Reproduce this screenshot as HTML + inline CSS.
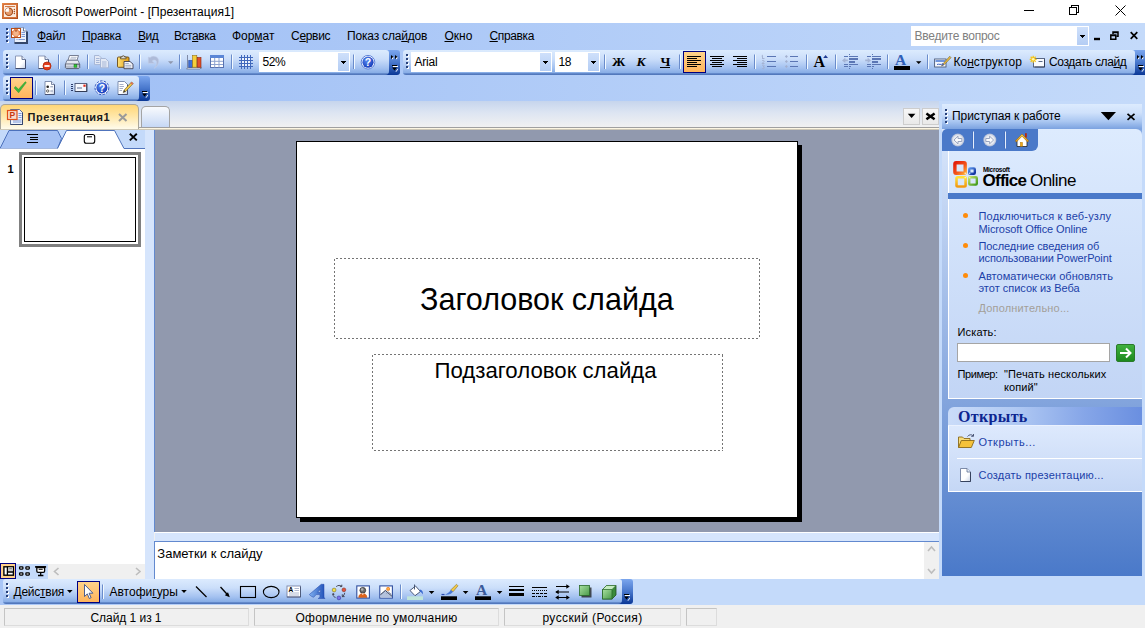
<!DOCTYPE html>
<html lang="ru"><head><meta charset="utf-8"><title>Microsoft PowerPoint - [Презентация1]</title>
<style>
*{box-sizing:border-box;margin:0;padding:0}
html,body{width:1145px;height:628px;overflow:hidden;background:#fff}
body{position:relative;font-family:"Liberation Sans",sans-serif;font-size:12px;color:#000}
.a{position:absolute}
.t{position:absolute;white-space:nowrap;line-height:1}
u{text-decoration:underline;text-underline-offset:1px;text-decoration-thickness:1px}
.tb{position:absolute;height:25px;border-radius:3px 3px 4px 3px;background:linear-gradient(#dcebfe 0,#cbdefa 9px,#a3c1f0 18px,#86ace5 23px,#6389cb 23.500px,#4a70b4 25px)}
.cap{position:absolute;width:12px;height:25px;border-radius:0 3px 3px 0;background:linear-gradient(#7ba6ee 0%,#4877cc 50%,#0a3796 100%)}
.grip{position:absolute;width:3px;height:15px;background:
 linear-gradient(#27417a,#27417a) 0 0/2px 2px no-repeat,linear-gradient(#27417a,#27417a) 0 4px/2px 2px no-repeat,linear-gradient(#27417a,#27417a) 0 8px/2px 2px no-repeat,linear-gradient(#27417a,#27417a) 0 12px/2px 2px no-repeat,
 linear-gradient(#fff,#fff) 1px 1px/2px 2px no-repeat,linear-gradient(#fff,#fff) 1px 5px/2px 2px no-repeat,linear-gradient(#fff,#fff) 1px 9px/2px 2px no-repeat,linear-gradient(#fff,#fff) 1px 13px/2px 2px no-repeat}
.sep{position:absolute;width:2px;height:15px;border-left:1px solid #6a8ccb;border-right:1px solid #f1f9ff;border-top:1px solid transparent}
.on{position:absolute;border:1px solid #000080;background:linear-gradient(#ffd28a,#ffb45c)}
.combo{position:absolute;background:#fff;height:20px}
.dd{position:absolute;right:1px;top:1px;bottom:1px;width:11px;background:linear-gradient(#000,#000) 3px 8px/5px 1px no-repeat,linear-gradient(#000,#000) 4px 9px/3px 1px no-repeat,linear-gradient(#000,#000) 5px 10px/1px 1px no-repeat,linear-gradient(#cfe0fb,#b4cdf4)}
svg{position:absolute;overflow:visible}
.ph{position:absolute;background:repeating-linear-gradient(90deg,#747474 0 2px,transparent 2px 4px) 2px 0/calc(100% - 2px) 1px no-repeat,repeating-linear-gradient(90deg,#747474 0 2px,transparent 2px 4px) 2px 100%/calc(100% - 2px) 1px no-repeat,repeating-linear-gradient(180deg,#747474 0 2px,transparent 2px 4px) 0 1px/1px calc(100% - 1px) no-repeat,repeating-linear-gradient(180deg,#747474 0 2px,transparent 2px 4px) 100% 1px/1px calc(100% - 1px) no-repeat}
.lnk{color:#1c3fa8}
.p{font-size:11px}
.sp{position:absolute;height:18px;top:608px;border:1px solid #dcdcdc;border-top-color:#c4c4c4;border-left-color:#c4c4c4;font-size:12px;text-align:center;line-height:16px;padding-top:1px;white-space:nowrap}
</style></head><body>
<!-- TITLE BAR -->
<div class="a" style="left:0;top:0;width:1145px;height:23px;background:#fff"></div>
<svg style="left:2px;top:3px" width="16" height="16" viewBox="0 0 16 16">
<defs><linearGradient id="gi" x1="0" y1="0" x2="1" y2="1"><stop offset="0" stop-color="#e8894a"/><stop offset="1" stop-color="#a8481a"/></linearGradient></defs>
<rect x="0" y="0" width="16" height="16" fill="url(#gi)"/><rect x="1" y="1" width="14" height="14" fill="#d8743c"/><rect x="2" y="2" width="12" height="12" fill="#fcece0"/>
<rect x="3" y="3" width="10" height="1" fill="#d07a48"/><circle cx="6.900" cy="8.800" r="3.700" fill="#e39a6c" stroke="#a8501f" stroke-width="1.100"/><path d="M6.900 8.800V5.100A3.700 3.700 0 0 0 3.200 8.800z" fill="#fff"/>
<circle cx="12.400" cy="6.600" r=".750" fill="#a8501f"/><circle cx="12.400" cy="8.600" r=".750" fill="#a8501f"/><circle cx="12.400" cy="10.600" r=".750" fill="#a8501f"/></svg>
<div class="t" style="left:22.700px;top:6px;font-size:12px;letter-spacing:.04px">Microsoft PowerPoint - [Презентация1]</div>
<svg style="left:0;top:0" width="1145" height="23" viewBox="0 0 1145 23" fill="none" stroke="#000" stroke-width="1" shape-rendering="crispEdges"><path d="M1024 10.5h10"/><path d="M1069.500 7.500h7v7h-7z"/><path d="M1071.500 7.500v-2h7v7h-2"/><path d="M1115.5 5.5l10 10M1125.5 5.5l-10 10" shape-rendering="auto"/></svg>

<!-- MENU BAR + dock background -->
<div class="a" style="left:0;top:23px;width:1145px;height:81px;background:linear-gradient(90deg,#9ebef5,#c4dafa)"></div>
<div class="grip" style="left:6px;top:28px"></div>
<svg style="left:10px;top:26px" width="20" height="19" viewBox="10 26 20 19">
<path d="M14.500 27.500h9l3.500 3.500v12h-12.500z" fill="#e9f0fc" stroke="#93a5c8" stroke-width="1"/><path d="M23.500 27.500v3.500h3.500" fill="#fff" stroke="#5a6c92" stroke-width=".9"/><path d="M27 31.500v11.500h-12.500" fill="none" stroke="#34466a" stroke-width="2"/>
<path d="M21.500 32.500h3.500M21.500 34.500h3.500M21.500 36.500h3.500M16.500 39.500h1M18.500 39.500h6.500" stroke="#7f9bd8" stroke-width="1"/>
<rect x="11.500" y="28.500" width="9" height="9" fill="#e8824a" stroke="#b24c1a" stroke-width="1"/><circle cx="16" cy="33.200" r="2.800" fill="#f4b48a"/>
<path d="M12.600 31v-1.400h1.400M18 29.600h1.400v1.400M19.400 35v1.400h-1.400M14 36.400h-1.400v-1.400" fill="none" stroke="#fff" stroke-width="1.100"/><path d="M15 30.500l1 1.500 1-1.500z" fill="#7a2a0a"/></svg>
<div class="t m" style="top:30.300px;left:37px;letter-spacing:-.3px"><u>Ф</u>айл</div>
<div class="t m" style="top:30.300px;left:82px;letter-spacing:-.2px"><u>П</u>равка</div>
<div class="t m" style="top:30.300px;left:138px;letter-spacing:-.45px"><u>В</u>ид</div>
<div class="t m" style="top:30.300px;left:174px;letter-spacing:-.44px">Вст<u>а</u>вка</div>
<div class="t m" style="top:30.300px;left:232px;letter-spacing:-.05px">Фор<u>м</u>ат</div>
<div class="t m" style="top:30.300px;left:291px;letter-spacing:-.3px">С<u>е</u>рвис</div>
<div class="t m" style="top:30.300px;left:347px;letter-spacing:-.18px">Показ сла<u>й</u>дов</div>
<div class="t m" style="top:30.300px;left:444.5px"><u>О</u>кно</div>
<div class="t m" style="top:30.300px;left:489.5px;letter-spacing:-.37px"><u>С</u>правка</div>
<div class="combo" style="left:911px;top:26px;width:178px;height:20px"><div class="dd"></div></div>
<div class="t" style="left:914.5px;top:30px;font-size:12px;color:#808080;letter-spacing:-.25px">Введите вопрос</div>
<svg style="left:0;top:23px" width="1145" height="27" viewBox="0 23 1145 27" fill="none" stroke="#000"><path d="M1094 39h6" stroke-width="2.4"/><path d="M1110.8 35h5v4.2h-5zM1110.8 35.6h5" stroke-width="1.5"/><path d="M1113 34v-2h5v4.2h-1.6M1113 32.6h5" stroke-width="1.5"/><path d="M1130.7 32.2l6.6 6.6M1137.3 32.2l-6.6 6.6" stroke-width="1.700"/></svg>
<!-- TOOLBAR 1 (Standard) -->
<div class="cap" style="left:384px;top:50px;width:16px"></div><div class="tb" style="left:3px;top:50px;width:386px"></div>
<div class="grip" style="left:6px;top:54px"></div>
<div class="sep" style="left:58px;top:54px"></div><div class="sep" style="left:87px;top:54px"></div><div class="sep" style="left:139px;top:54px"></div><div class="sep" style="left:179px;top:54px"></div><div class="sep" style="left:231px;top:54px"></div><div class="sep" style="left:353px;top:54px"></div>
<div class="combo" style="left:259px;top:52px;width:91px"><div class="dd"></div></div>
<div class="t" style="left:262.5px;top:56px;font-size:12px;letter-spacing:-.4px">52%</div>
<svg style="left:0;top:48px" width="420" height="30" viewBox="0 48 420 30">
<defs>
<linearGradient id="gpap" x1="0" y1="0" x2="1" y2="1"><stop offset="0" stop-color="#fff"/><stop offset=".6" stop-color="#fff"/><stop offset="1" stop-color="#c9d3e6"/></linearGradient>
<linearGradient id="ggold" x1="0" y1="0" x2="1" y2="0"><stop offset="0" stop-color="#ffe27a"/><stop offset="1" stop-color="#e29a10"/></linearGradient>
<radialGradient id="ghelp" cx=".4" cy=".35" r=".7"><stop offset="0" stop-color="#5a8af0"/><stop offset="1" stop-color="#1238b8"/></radialGradient>
</defs>
<!-- new -->
<path d="M15.500 56h6.500l3.500 3.500v9h-10z" fill="url(#gpap)" stroke="#8592b2" stroke-width=".9"/><path d="M25.500 59.500v9h-10" fill="none" stroke="#3f4c6e"/><path d="M22 56v3.500h3.500" fill="#e8eef9" stroke="#5e6e92" stroke-width=".9"/>
<!-- new + stop -->
<path d="M38.500 56h6.500l3.500 3.500v9h-10z" fill="url(#gpap)" stroke="#8592b2" stroke-width=".9"/><path d="M48.500 59.500v9h-10" fill="none" stroke="#3f4c6e"/><path d="M45 56v3.500h3.500" fill="#e8eef9" stroke="#5e6e92" stroke-width=".9"/>
<circle cx="47" cy="66" r="4" fill="#e23c1c" stroke="#b02808" stroke-width=".8"/><rect x="44.400" y="65.100" width="5.200" height="1.800" fill="#fff"/>
<!-- print -->
<path d="M68 60.300l1.500-4.800h9l-1.500 4.800z" fill="#fff" stroke="#6a7288" stroke-width=".9"/><path d="M70.800 57.300h5.800M70.200 58.900h5.800" stroke="#a4aec4" stroke-width=".8"/>
<path d="M67 60.300h11l1.700 3.900h-14.300z" fill="#e6e9f0" stroke="#666e84" stroke-width=".8"/>
<path d="M65.400 64.200h14.300v3.400l-1 1h-12.300l-1-1z" fill="#b9bfcc" stroke="#4f566a" stroke-width=".9"/><path d="M66 65h8" stroke="#eef0f5" stroke-width="1"/>
<rect x="74" y="64.700" width="2.800" height="2.500" fill="#2ccc2c" stroke="#167816" stroke-width=".5"/>
<!-- copy (disabled) -->
<g fill="#e3e9f5" stroke="#a3b2d2" stroke-width=".9"><path d="M94.5 55.5h4.5l2.8 2.8v6.3h-7.3z"/><path d="M100.5 58.5h5l3 3v6.3h-8z"/></g><path d="M96 58.5h3.5M96 60.5h3.5M96 62.5h3.5M102 62h4.5M102 64h4.5M102 66h4.5" stroke="#9fb0d4" stroke-width=".9"/>
<!-- paste -->
<rect x="117.5" y="57" width="11.5" height="10.3" rx="1" fill="url(#ggold)" stroke="#6a4a14" stroke-width=".9"/><path d="M120.5 58.8v-1.8h1.5a1.3 1.3 0 0 1 2.6 0h1.5v1.8z" fill="#d9d9d9" stroke="#5a4a2a" stroke-width=".8"/>
<path d="M124 61.5h6l3 2.6v4.6h-9z" fill="#f4f6fb" stroke="#3f3f55" stroke-width=".9"/><path d="M125.3 63.5h3.5M125.3 65.3h6M125.3 67h6" stroke="#8f9bb8" stroke-width=".8"/>
<!-- undo (disabled) -->
<path d="M148.3 57v6.3h6.2l-2.3-2.3c1.6-1.6 4-1.2 4.4 1 .4 2.2-.8 4.400-2.300 6.300 3.600-2.300 5.200-6.600 3.900-9.400-1.400-2.900-5.700-3.500-8-1.300z" fill="#aebbd9" stroke="#c4cfe6" stroke-width=".5"/>
<path d="M168 61.200h5.400l-2.700 2.800z" fill="#8e97ae"/>
<!-- chart -->
<path d="M187.500 55v13.500h14" fill="none" stroke="#7f8aa6" stroke-width="1"/><path d="M186.500 69l1.500-1.500h13.500l-1.500 1.500z" fill="#dfe5f0" stroke="#5a6480" stroke-width=".6"/>
<rect x="188.800" y="60.600" width="3.600" height="6.600" fill="#3f6fd8" stroke="#1f3f98" stroke-width=".6"/><rect x="192.600" y="55.600" width="4.200" height="11.600" fill="#f5cf3a" stroke="#9a7410" stroke-width=".6"/><rect x="197.200" y="57.600" width="3.800" height="9.600" fill="#e2502a" stroke="#8a2208" stroke-width=".6"/>
<!-- table -->
<rect x="210.500" y="55.500" width="13" height="12" fill="#fff" stroke="#5872b0" stroke-width="1"/><rect x="210" y="55" width="14" height="3" fill="#5b86d6"/><path d="M214.700 58v9.500M219 58v9.500M211 61.300h12M211 64.500h12" stroke="#8ea3d0" stroke-width="1"/>
<!-- grid -->
<rect x="242" y="58" width="8" height="8" fill="#fff" opacity=".7"/><path d="M241.500 55v14M244.500 55v14M247.500 55v14M250.500 55v14M239 57.500h14M239 60.500h14M239 63.500h14M239 66.500h14" stroke="#4068bc" stroke-width="1" shape-rendering="crispEdges"/>
<!-- help -->
<circle cx="368" cy="62.200" r="6.800" fill="#fff" stroke="#3f6ad0" stroke-width=".8"/><circle cx="368" cy="62.200" r="5.600" fill="url(#ghelp)"/>
<text x="368" y="66" font-family="Liberation Sans,sans-serif" font-weight="bold" font-size="10.500" fill="#fff" text-anchor="middle">?</text>
<!-- cap glyphs -->
<g fill="#000"><path d="M391 55l2.500 2-2.500 2zM395 55l2.500 2-2.500 2z"/><rect x="392" y="65" width="5" height="1"/><path d="M392 67.500h5l-2.500 3z"/></g>
<g fill="#fff"><path d="M392 58l1.500-1v1.200l-1.500 1.200zM396 58l1.500-1v1.200l-1.500 1.200z"/><rect x="393" y="66" width="5" height="1"/><path d="M395.500 71.500l2.500-3v1.200l-2 2.300z"/></g>
</svg>
<!-- TOOLBAR 2 (Formatting) -->
<div class="cap" style="left:1130px;top:50px;width:15px;border-radius:0"></div><div class="tb" style="left:403px;top:50px;width:732px"></div>
<div class="grip" style="left:406px;top:54px"></div>
<div class="combo" style="left:411px;top:52px;width:141px"><div class="dd"></div></div>
<div class="t" style="left:414.5px;top:56px;font-size:12px;letter-spacing:-.2px">Arial</div>
<div class="combo" style="left:555px;top:52px;width:45px"><div class="dd"></div></div>
<div class="t" style="left:558.500px;top:56px;font-size:12px;letter-spacing:-.3px">18</div>
<div class="sep" style="left:604px;top:54px"></div><div class="sep" style="left:679px;top:54px"></div><div class="sep" style="left:754px;top:54px"></div><div class="sep" style="left:806px;top:54px"></div><div class="sep" style="left:835px;top:54px"></div><div class="sep" style="left:887px;top:54px"></div><div class="sep" style="left:927px;top:54px"></div>
<div class="t" style="left:612px;top:54.500px;font-size:13.500px;font-weight:bold;font-family:'Liberation Serif',serif">Ж</div>
<div class="t" style="left:636.500px;top:54.500px;font-size:13.500px;font-weight:bold;font-style:italic;font-family:'Liberation Serif',serif">К</div>
<div class="t" style="left:660.500px;top:54.500px;font-size:13.500px;font-weight:bold;font-family:'Liberation Serif',serif">Ч</div>
<div class="a" style="left:660px;top:67px;width:10px;height:1px;background:#000"></div>
<div class="on" style="left:683px;top:51px;width:23px;height:22px"></div>
<svg style="left:400px;top:48px" width="745" height="30" viewBox="400 48 745 30">
<g stroke="#000" stroke-width="1" shape-rendering="crispEdges">
<path d="M687 56.500h14M687 58.500h10M687 60.500h14M687 62.500h10M687 64.500h14M687 66.500h10"/>
<path d="M710 56.500h14M712 58.500h10M710 60.500h14M712 62.500h10M710 64.500h14M712 66.500h10"/>
<path d="M733 56.500h14M737 58.500h10M733 60.500h14M737 62.500h10M733 64.500h14M737 66.500h10"/>
</g>
<g stroke="#5b76b4" stroke-width="1" shape-rendering="crispEdges"><path d="M767 56.500h9M767 61.500h9M767 66.500h9M790 56.500h8M790 61.500h8M790 66.500h8"/></g>
<g fill="#a3b0cf"><path d="M762.500 58.500v-3.200l-.9.700M762 58.500h2.500" stroke="#a3b0cf" stroke-width=".9" fill="none"/><path d="M762 60.800c1-.8 2.300-.3 2.300.5 0 .9-2.300 1.300-2.300 2.200h2.500" stroke="#a3b0cf" stroke-width=".9" fill="none"/><path d="M762 65.400c1-.6 2.300-.3 2.300.5 0 .6-.7.900-1.300.9.700 0 1.400.3 1.400 1 0 .9-1.500 1.100-2.500.500" stroke="#a3b0cf" stroke-width=".9" fill="none"/>
<path d="M786.400 55l1.500 1.500-1.500 1.500-1.500-1.500zM786.400 60l1.500 1.500-1.500 1.500-1.500-1.500zM786.400 65l1.500 1.500-1.500 1.500-1.500-1.500z"/></g>
<path d="M823.200 58.100l2.400-3 2.400 3z" fill="#1f3a93"/>
<!-- indent icons (disabled) -->
<g stroke="#5b76b4" shape-rendering="crispEdges"><path d="M844 56.500h4M844 64.500h4M844 66.500h4M849 56.500h9M849 64.500h9M849 66.500h2" stroke-width="1"/><path d="M849 59h9M849 62h6" stroke-width="2"/><path d="M849.5 54v1M849.5 68v1" stroke-width="1"/></g><path d="M842 60.400l3.300-2.600v1.800h2.500v1.600h-2.500v1.800z" fill="#a4b3d4"/>
<g stroke="#5b76b4" shape-rendering="crispEdges"><path d="M867 56.500h4M867 64.500h4M867 66.500h4M872 56.500h9M872 64.500h9M872 66.500h2" stroke-width="1"/><path d="M872 59h9M872 62h6" stroke-width="2"/><path d="M872.5 54v1M872.5 68v1" stroke-width="1"/></g><path d="M871 60.400l-3.300-2.600v1.800h-2.500v1.600h2.500v1.800z" fill="#a4b3d4"/>
<!-- font colour -->
<rect x="894" y="66" width="16" height="4" fill="#000"/><path d="M916 61.200h5.400l-2.700 2.800z" fill="#000"/>
<!-- design icon -->
<rect x="934.600" y="59" width="11.400" height="8" fill="#f4f7fd" stroke="#4a5a7a" stroke-width=".9"/><rect x="935.500" y="60" width="9.600" height="2" fill="#6f94dc"/><path d="M937 64.500c2-1 4 1 6-1" stroke="#3f63c0" fill="none"/><path d="M949.800 56.300l-6.600 7.300-1.700 2.400 2.600-1.300 6.900-7z" fill="#f0c040" stroke="#6a5a2a" stroke-width=".6"/><path d="M941.500 66l1.700-2.400 1 .9z" fill="#3a5ac0"/>
<!-- new slide icon -->
<rect x="1033.500" y="58.500" width="11" height="8.500" fill="#f8fafe" stroke="#4a5a7a" stroke-width=".9"/><path d="M1038.500 61.500h4" stroke="#5a6a8a"/><path d="M1044.500 59.500v7.500h-10" fill="none" stroke="#2f3a55" stroke-width=".9"/>
<g stroke="#f5c518" stroke-width="1.300"><path d="M1033.200 55.800v7M1029.700 59.300h7M1030.700 56.800l5 5M1035.700 56.800l-5 5"/></g><circle cx="1033.200" cy="59.300" r="1.300" fill="#fff6b0"/>
<!-- cap glyphs -->
<g fill="#000"><path d="M1137 55l2.500 2-2.500 2zM1141 55l2.500 2-2.500 2z"/><rect x="1138" y="65" width="5" height="1"/><path d="M1138 67.500h5l-2.500 3z"/></g>
<g fill="#fff"><path d="M1138 58l1.500-1v1.200l-1.500 1.200zM1142 58l1.500-1v1.200l-1.500 1.200z"/><rect x="1139" y="66" width="5" height="1"/><path d="M1141.500 71.500l2.500-3v1.200l-2 2.300z"/></g>
</svg>
<div class="t" style="left:813.500px;top:54.300px;font-size:16px;font-weight:bold;font-family:'Liberation Serif',serif">A</div>
<div class="t" style="left:895px;top:51.500px;font-size:15.500px;font-weight:bold;font-family:'Liberation Serif',serif;color:#2f5fb8">A</div>
<div class="t" style="left:953.500px;top:56px;font-size:12px">Ко<u>н</u>структор</div>
<div class="t" style="left:1049px;top:56px;font-size:12px;letter-spacing:-.38px">Создать сла<u>й</u>д</div>
<!-- TOOLBAR 3 -->
<div class="cap" style="left:135px;top:76px;width:15px"></div><div class="tb" style="left:3px;top:76px;width:136px"></div>
<div class="grip" style="left:6px;top:80px"></div>
<div class="on" style="left:10px;top:77px;width:23px;height:22px"></div>
<div class="sep" style="left:35px;top:80px"></div><div class="sep" style="left:64px;top:80px"></div>
<svg style="left:0;top:74px" width="160" height="30" viewBox="0 74 160 30">
<path d="M14.200 88l1.300-1.600 3 2.900 6.800-7.600 1 .9-7.700 10.200z" fill="#3cb83c" stroke="#2a922a" stroke-width=".5"/>
<!-- options doc -->
<path d="M45 81.500h6.500l3 3v10h-9.500z" fill="url(#gpap)" stroke="#7383a6" stroke-width=".9"/><path d="M54.500 84.500v10h-9.500" fill="none" stroke="#3f4c6e" stroke-width=".9"/><path d="M51.500 81.500v3h3" fill="#e8eef9" stroke="#5e6e92" stroke-width=".8"/>
<circle cx="47.700" cy="86.800" r="1.300" fill="#222"/><circle cx="47.700" cy="91" r="1.200" fill="#fff" stroke="#222" stroke-width=".7"/><path d="M50.300 86.800h2.700M50.300 91h2.700" stroke="#8894b0"/>
<!-- envelope -->
<path d="M71 84.500h2M71 86.500h2M71 88.500h2M71 90.500h2" stroke="#2a3a6a" stroke-width="1"/><rect x="75" y="83.500" width="11.800" height="8" fill="#f6f8fd" stroke="#4a5676" stroke-width=".9"/><path d="M86.800 84v7.500h-11.800" fill="none" stroke="#2f3850" stroke-width=".9"/><path d="M77 88h5" stroke="#7a86a8" stroke-width="1.200"/><rect x="83.400" y="84.600" width="2.200" height="2.200" fill="#e02a1a"/>
<!-- help -->
<circle cx="101.900" cy="87.800" r="6.900" fill="#fff" stroke="#2a52c0" stroke-width="1" stroke-dasharray="2.600 1.200"/><circle cx="101.900" cy="87.800" r="5.600" fill="url(#ghelp)"/>
<text x="101.900" y="91.600" font-family="Liberation Sans,sans-serif" font-weight="bold" font-size="10.500" fill="#fff" text-anchor="middle">?</text>
<!-- doc + pencil -->
<path d="M118 81.500h6.500l3 3v10h-9.500z" fill="url(#gpap)" stroke="#7383a6" stroke-width=".9"/><path d="M127.500 84.500v10h-9.500" fill="none" stroke="#3f4c6e" stroke-width=".9"/><path d="M119.500 84.500h4M119.500 86.500h4.500M119.500 88.500h3.500M119.500 90.500h2.500" stroke="#8f9bb8" stroke-width=".8"/>
<path d="M131.500 82l1.800 1.500-7.600 8-2.400 1 .8-2.400z" fill="#f0c848" stroke="#6a5a2a" stroke-width=".6"/><path d="M131.500 82l1.800 1.500-1.200 1.300-1.800-1.500z" fill="#e0705a"/><path d="M123.300 92.500l.8-2.400 1.500 1.400z" fill="#333"/>
<!-- cap glyph -->
<g fill="#000"><rect x="142" y="91" width="5" height="1"/><path d="M142 93.500h5l-2.500 3z"/></g><g fill="#fff"><rect x="143" y="92" width="5" height="1"/><path d="M145.500 97.500l2.500-3v1.200l-2 2.300z"/></g>
</svg>

<!-- DOCUMENT TAB STRIP -->
<div class="a" style="left:0;top:101px;width:939px;height:26px;background:linear-gradient(#c6d5ed 0%,#dde5f2 45%,#f1f1f1 100%)"></div>
<div class="a" style="left:0;top:127px;width:939px;height:3px;background:linear-gradient(#a0a0a0 0 1px,#fdf6e2 1px 2px,#cdc7b6 2px 3px)"></div>
<div class="a" style="left:0;top:104px;width:139px;height:25px;border:1px solid #aaa69a;border-bottom:0;border-radius:5px 5px 0 0;background:linear-gradient(#ffd677 0%,#ffe6a6 45%,#fffbec 100%)"></div>
<svg style="left:6px;top:108px" width="18" height="18" viewBox="6 108 18 18">
<path d="M10.500 109.500h9l3 3v12h-12z" fill="#eef3fc" stroke="#4a5f8f" stroke-width=".9"/><path d="M22.500 112.500v12h-12" fill="none" stroke="#2f3f68" stroke-width=".9"/><path d="M18.500 113.500h3M18.500 115.500h3M18.500 117.500h3M13 120h8.500M13 122h8.500" stroke="#6f8fd4" stroke-width=".9"/>
<rect x="7.500" y="110.500" width="9.500" height="9" fill="#f6dccc" stroke="#e2501a" stroke-width="1.200"/>
<text x="12.300" y="118.300" font-family="Liberation Sans,sans-serif" font-weight="bold" font-size="8.500" fill="#c8380e" text-anchor="middle">P</text></svg>
<div class="t" id="tabtxt" style="left:27.500px;top:111.500px;font-size:11px;font-weight:bold;letter-spacing:.52px;color:#1a1a1a">Презентация1</div>
<svg style="left:118px;top:113px" width="10" height="9" viewBox="0 0 10 9"><path d="M1 1l7.500 7M8.500 1l-7.500 7" stroke="#9a9a9a" stroke-width="2"/></svg>
<div class="a" style="left:141px;top:106px;width:29px;height:21px;border:1px solid #a4a4a4;border-bottom:0;border-radius:5px 5px 0 0;background:linear-gradient(#f8fafd,#c6d8f5)"></div>
<div class="a" style="left:903px;top:108px;width:17px;height:17px;background:linear-gradient(#f7f7f7,#e9e9e9);border:1px solid #cdcdcd"></div>
<div class="a" style="left:922px;top:108px;width:17px;height:17px;background:linear-gradient(#f7f7f7,#e9e9e9);border:1px solid #cdcdcd"></div>
<svg style="left:900px;top:104px" width="40" height="24" viewBox="900 104 40 24"><path d="M907.800 113.800h7.600l-3.800 4.100z" fill="#000"/><path d="M926.400 113.400l8.200 5.800M934.600 113.400l-8.200 5.800" stroke="#000" stroke-width="2.500"/></svg>
<!-- LEFT PANE -->
<div class="a" style="left:0;top:130px;width:145px;height:449px;background:#fff"></div>
<div class="a" style="left:145px;top:130px;width:9px;height:449px;background:#d6e5fc"></div>
<svg style="left:0;top:129px" width="146" height="21" viewBox="0 129 146 21">
<rect x="0" y="130" width="145" height="18.500" fill="#c4dafa"/>
<path d="M0 148.500L9 130.500h48.500l4 8-4 10z" fill="#a5c1f4" stroke="#3f66b4" stroke-width=".9"/>
<path d="M57.500 148.500L66.500 130.500h48l9.500 18H145v1.500H0v-1.500z" fill="#fff"/><path d="M57.500 148.500L66.500 130.500h48l9.500 18H145" fill="none" stroke="#3f66b4" stroke-width=".9"/>
<g stroke="#000" stroke-width="1.100" shape-rendering="crispEdges"><path d="M27 134.500h11M30 137.500h8M30 139.500h8M27 142.500h11"/></g>
<rect x="84.300" y="134.500" width="10.400" height="8.800" rx="2" fill="#fff" stroke="#000" stroke-width="1.100"/><path d="M87 136.800h5" stroke="#000" stroke-width="1"/>
<path d="M129.800 133.800l7 6.600M136.800 133.800l-7 6.600" stroke="#000" stroke-width="1.900"/>
</svg>
<div class="a" style="left:19px;top:152px;width:122px;height:95px;border:3px solid #808080;background:#fff"></div>
<div class="a" style="left:24px;top:157px;width:112px;height:85px;border:1px solid #000;background:#fff"></div>
<div class="t" style="left:7.500px;top:164px;font-size:11px;font-weight:bold">1</div>
<!-- view buttons + h scrollbar -->
<div class="a" style="left:0;top:564px;width:48px;height:15px;background:#c4dafa"></div>
<div class="a" style="left:48px;top:564px;width:97px;height:15px;background:#f0f0f0"></div>
<div class="on" style="left:0;top:563px;width:16px;height:16px;background:#ffd08a"></div>
<svg style="left:0;top:563px" width="146" height="16" viewBox="0 563 146 16">
<rect x="3.900" y="566.800" width="9.500" height="8.400" fill="#fff" stroke="#000" stroke-width="1.400"/><rect x="8" y="567.500" width="5" height="4" fill="#c9c9c9"/><path d="M7.400 566.800v8.400M7.400 572h6" stroke="#000" stroke-width="1.300"/><path d="M9.300 568.600h2.600" stroke="#777" stroke-width=".8"/>
<g fill="#fff" stroke="#000" stroke-width="1.300"><rect x="19.600" y="566.900" width="3.300" height="2.200" rx=".5"/><rect x="25.900" y="566.900" width="3.400" height="2.200" rx=".5"/><rect x="19.600" y="572.900" width="3.300" height="2.200" rx=".5"/><rect x="25.900" y="572.900" width="3.400" height="2.200" rx=".5"/></g>
<path d="M36.800 567.500h7.800v3.600a1.200 1.200 0 0 1-1.200 1.200h-5.400a1.200 1.200 0 0 1-1.200-1.200z" fill="#fff" stroke="#000" stroke-width="1.300"/><path d="M35.100 566.900h11" stroke="#000" stroke-width="1.700"/><path d="M38.700 569.300h4" stroke="#000" stroke-width="1"/><path d="M40.700 572.300v3M38 575.500h5.400" stroke="#000" stroke-width="1.300"/>
<path d="M58.500 568l-4 3.500 4 3.500M136 568l4 3.500-4 3.500" fill="none" stroke="#bdbdbd" stroke-width="1.600"/>
</svg>

<!-- WORKSPACE -->
<div class="a" style="left:154px;top:130px;width:785px;height:402px;background:#9199ae;border-left:1px solid #6289cf"></div>
<div class="a" style="left:300px;top:145px;width:502px;height:377px;background:#000"></div>
<div class="a" style="left:296px;top:141px;width:502px;height:377px;background:#fff;border:1px solid #000"></div>
<div class="ph" style="left:334px;top:258px;width:426px;height:81px"></div>
<div class="ph" style="left:372px;top:354px;width:351px;height:97px"></div>
<div class="t" style="left:420px;top:284px;font-size:30.500px">Заголовок слайда</div>
<div class="t" style="left:434.500px;top:360.200px;font-size:22.200px">Подзаголовок слайда</div>

<!-- NOTES -->
<div class="a" style="left:154px;top:532px;width:785px;height:9px;background:#d6e5fc;border-top:1px solid #fff;border-left:1px solid #f0f0f0"></div>
<div class="a" style="left:154px;top:541px;width:785px;height:38px;background:#fff;border-top:1px solid #6289cf;border-left:1px solid #6289cf"></div>
<div class="a" style="left:924px;top:542px;width:15px;height:37px;background:#f0f0f0"></div>
<svg style="left:924px;top:542px" width="15" height="37" viewBox="0 0 15 37"><path d="M4 9l3.500-4 3.500 4M4 27l3.500 4 3.500-4" fill="none" stroke="#bdbdbd" stroke-width="1.600"/></svg>
<div class="t" style="left:157.300px;top:546.600px;font-size:13px">Заметки к слайду</div>
<!-- TASK PANE -->
<div class="a" style="left:939px;top:101px;width:206px;height:478px;background:#c4dafa"></div>
<div class="a" style="left:942px;top:104px;width:200px;height:472px;background:linear-gradient(#dbe8fc 25px,#4a79c9 100%)"></div>
<div class="a" style="left:942px;top:104px;width:200px;height:25px;background:linear-gradient(#dcebfe 0%,#cfe1fb 35%,#a9c6f1 70%,#7ba2e0 100%)"></div>
<div class="grip" style="left:945px;top:109px"></div>
<div class="t" style="left:952px;top:110px;font-size:12px;letter-spacing:-.07px">Приступая к работе</div>
<svg style="left:1095px;top:104px" width="50" height="24" viewBox="1095 104 50 24"><path d="M1100.800 112h15.200l-7.600 8.200z" fill="#000"/><path d="M1127.500 113.800l7 6M1134.500 113.800l-7 6" stroke="#000" stroke-width="1.700"/></svg>
<!-- section 1 -->
<div class="a" style="left:1134px;top:129px;width:8px;height:7px;background:linear-gradient(#7ba2e0,#a9c4f0)"></div>
<div class="a" style="left:948px;top:129px;width:194px;height:270px;background:linear-gradient(#ddebfe,#c2d5f5);border-radius:0 6px 0 0;border-left:1px solid #fff;border-bottom:1px solid #fff"></div>
<div class="a" style="left:942px;top:129px;width:96px;height:22px;background:#4a79c9;border-radius:5px 0 6px 0"></div>
<svg style="left:942px;top:129px" width="96" height="22" viewBox="942 129 96 22">
<defs><radialGradient id="gnav" cx=".5" cy=".5" r=".5"><stop offset="0" stop-color="#fff"/><stop offset=".7" stop-color="#e4e8f0"/><stop offset="1" stop-color="#a9b6d2"/></radialGradient>
<linearGradient id="groof" x1="0" y1="0" x2="0" y2="1"><stop offset="0" stop-color="#ffd64a"/><stop offset="1" stop-color="#e89a10"/></linearGradient></defs>
<circle cx="957.800" cy="140" r="6.500" fill="url(#gnav)"/><path d="M954 140l4-3.800v2.300h3.800v3h-3.800v2.300z" fill="#fafbfd" stroke="#8f9bb8" stroke-width=".9"/>
<circle cx="989.800" cy="140" r="6.500" fill="url(#gnav)"/><path d="M993.600 140l-4-3.800v2.300h-3.800v3h3.800v2.300z" fill="#fafbfd" stroke="#8f9bb8" stroke-width=".9"/>
<path d="M973.500 131.500v17M1005.500 131.500v17" stroke="#e6eefc" stroke-width="1"/><path d="M972.500 131.500v17M1004.500 131.500v17" stroke="#3f69b4" stroke-width="1" opacity=".6"/>
<rect x="1025" y="133.200" width="1.800" height="4.500" fill="#b02a10"/><path d="M1017 140.300l5-5.200 5 5.200v6.200h-10z" fill="#fff" stroke="#222" stroke-width=".8"/><path d="M1015.200 141l6.800-7 6.800 7-1.100 1-5.700-5.800-5.700 5.800z" fill="url(#groof)" stroke="#8a5a08" stroke-width=".5"/><rect x="1020.300" y="142.300" width="2.300" height="4" fill="#f0a818" stroke="#a87408" stroke-width=".4"/>
</svg>
<!-- Office Online logo -->
<svg style="left:952px;top:160px" width="28" height="29" viewBox="952 160 28 29">
<defs><linearGradient id="lr" x1="0" y1="0" x2="1" y2="1"><stop offset="0" stop-color="#e21c0a"/><stop offset=".6" stop-color="#f4561a"/><stop offset="1" stop-color="#ffa832"/></linearGradient>
<linearGradient id="lb" x1="0" y1="0" x2="1" y2="1"><stop offset="0" stop-color="#5a94ea"/><stop offset="1" stop-color="#10309c"/></linearGradient>
<linearGradient id="ly" x1="0" y1="0" x2="0" y2="1"><stop offset="0" stop-color="#ffe23a"/><stop offset="1" stop-color="#f29a12"/></linearGradient>
<linearGradient id="lg" x1="0" y1="0" x2="1" y2="1"><stop offset="0" stop-color="#c4e06a"/><stop offset="1" stop-color="#3f9a1a"/></linearGradient></defs>
<rect x="954.900" y="162.700" width="10.300" height="10.500" rx="1.200" fill="none" stroke="url(#lr)" stroke-width="3.400"/>
<rect x="969.200" y="168.400" width="5.600" height="5.300" rx="1" fill="none" stroke="url(#lb)" stroke-width="2.400"/>
<rect x="956.500" y="177.300" width="9.100" height="9.200" rx="1.200" fill="none" stroke="url(#ly)" stroke-width="2.600"/>
<rect x="969.200" y="177.200" width="7.600" height="7.400" rx="1" fill="none" stroke="url(#lg)" stroke-width="2.400"/>
<rect x="964.600" y="172.600" width="1.300" height="1.300" fill="#fff4d0"/><rect x="969" y="172.600" width="1.300" height="1.300" fill="#cfe0ff"/><rect x="964.600" y="177" width="1.300" height="1.300" fill="#fff8c0"/><rect x="969" y="177" width="1.300" height="1.300" fill="#e0f4b0"/>
</svg>
<div class="t" style="left:983px;top:166.700px;font-size:6.500px;font-weight:bold;letter-spacing:-.3px">Microsoft</div>
<div class="t" style="left:982.500px;top:172.100px;font-size:17px;font-weight:bold;letter-spacing:-.75px">Office</div>
<div class="t" style="left:1030px;top:172.100px;font-size:17px;letter-spacing:-.55px">Online</div>
<div class="a" style="left:948px;top:193px;width:194px;height:6px;background:#4a79c9"></div>
<div class="a" style="left:963px;top:213px;width:5px;height:5px;border-radius:50%;background:#ff8c0a"></div>
<div class="a" style="left:963px;top:243px;width:5px;height:5px;border-radius:50%;background:#ff8c0a"></div>
<div class="a" style="left:963px;top:273px;width:5px;height:5px;border-radius:50%;background:#ff8c0a"></div>
<div class="t p lnk" style="left:978.500px;top:210.700px;letter-spacing:.18px">Подключиться к веб-узлу</div>
<div class="t p lnk" style="left:978.500px;top:223.600px;letter-spacing:-.1px">Microsoft Office Online</div>
<div class="t p lnk" style="left:978.500px;top:240.700px;letter-spacing:-.1px">Последние сведения об</div>
<div class="t p lnk" style="left:978.500px;top:253.400px;letter-spacing:-.13px">использовании PowerPoint</div>
<div class="t p lnk" style="left:978.500px;top:270.500px;letter-spacing:.05px">Автоматически обновлять</div>
<div class="t p lnk" style="left:978.500px;top:283.300px">этот список из Веба</div>
<div class="t p" style="left:978.500px;top:303.300px;color:#a39f99;letter-spacing:.17px">Дополнительно...</div>
<div class="t p" style="left:957.500px;top:326.700px;letter-spacing:.15px">Искать:</div>
<div class="a" style="left:957px;top:343px;width:153px;height:19px;background:#fff;border:1px solid #a5a5a5"></div>
<div class="a" style="left:1116px;top:344px;width:19px;height:18px;background:linear-gradient(#3fb03f,#1d8a1d);border:1px solid #2a7a2a;border-radius:2px"></div>
<svg style="left:1116px;top:344px" width="19" height="18" viewBox="0 0 19 18"><path d="M4 9h10M10 4.500l4.500 4.500-4.500 4.500" fill="none" stroke="#fff" stroke-width="2"/></svg>
<div class="t p" style="left:957.500px;top:368.700px;letter-spacing:-.4px">Пример:</div>
<div class="t p" style="left:1004px;top:368.700px;letter-spacing:.13px">"Печать нескольких</div>
<div class="t p" style="left:1004px;top:381.900px;letter-spacing:.1px">копий"</div>
<!-- section 2 -->
<div class="a" style="left:948px;top:407px;width:194px;height:18px;background:linear-gradient(90deg,#cadcf9 0%,#b0c9f3 35%,#86a6e8 70%,#6a8fe0 100%);border-radius:6px 0 0 0"></div>
<div class="t" style="left:958px;top:408.700px;font-size:16px;font-weight:bold;font-family:'Liberation Serif',serif;color:#0c2590;letter-spacing:.35px">Открыть</div>
<div class="a" style="left:948px;top:425px;width:194px;height:67px;background:linear-gradient(#dde9fd,#c5d7f5);border-left:1px solid #fff;border-bottom:1px solid #fff;border-top:1px solid #eaf1fe"></div>
<svg style="left:956px;top:433px" width="20" height="52" viewBox="956 433 20 52">
<path d="M958.500 447.500v-10.500h4l1.500 1.500h6v2.500" fill="#f8dc7a" stroke="#8a6a18" stroke-width=".9"/><path d="M958.500 447.500l2.800-7h13l-3 7z" fill="#f5c23a" stroke="#8a6a18" stroke-width=".9"/><path d="M967.500 436.500c1.500-2 4-2.300 5.500-.8M973.500 434v2.300h-2.300" fill="none" stroke="#3f4a6a" stroke-width=".9"/>
<path d="M960.500 468.500h6.500l3.500 3.500v9.500h-10z" fill="url(#gpap)" stroke="#6f7f9f" stroke-width=".9"/><path d="M970.500 472v9.500h-10" fill="none" stroke="#2f3a55" stroke-width=".9"/><path d="M967 468.500v3.500h3.500" fill="#e8eef9" stroke="#5e6e92" stroke-width=".8"/>
</svg>
<div class="t p lnk" style="left:978.500px;top:436.800px;letter-spacing:.5px">Открыть...</div>
<div class="a" style="left:957px;top:458px;width:185px;height:1px;background:#fff"></div>
<div class="t p lnk" style="left:978.500px;top:469.700px;letter-spacing:.2px">Создать презентацию...</div>
<!-- DRAW TOOLBAR -->
<div class="a" style="left:0;top:579px;width:1145px;height:26px;background:linear-gradient(90deg,#a9c6f6,#c4dafa 40%)"></div>
<div class="cap" style="left:617px;top:579px;width:16px"></div><div class="tb" style="left:3px;top:579px;width:619px"></div>
<div class="grip" style="left:6px;top:583px"></div>
<div class="t" style="left:13.500px;top:585.500px;font-size:12px;letter-spacing:-.25px">Дейс<u>т</u>вия</div>
<div class="on" style="left:77px;top:581px;width:23px;height:22px"></div>
<div class="sep" style="left:102px;top:584px"></div><div class="sep" style="left:400px;top:584px"></div>
<div class="t" style="left:109.500px;top:585.500px;font-size:12px">Автофи<u>г</u>уры</div>
<svg style="left:0;top:576px" width="640" height="30" viewBox="0 576 640 30">
<defs><linearGradient id="ggreen" x1="0" y1="0" x2="1" y2="1"><stop offset="0" stop-color="#a8e0a0"/><stop offset="1" stop-color="#4a9a4a"/></linearGradient>
<linearGradient id="gwa" x1="0" y1="0" x2="1" y2="0"><stop offset="0" stop-color="#7fb0f0"/><stop offset="1" stop-color="#1f4fb8"/></linearGradient></defs>
<path d="M67 590h5.600l-2.800 3zM181.200 590h5.600l-2.800 3z" fill="#000"/>
<!-- cursor -->
<path d="M84.500 584.500v12l2.800-2.600 2 4.600 1.800-.8-2-4.500h3.800z" fill="#fff" stroke="#3a4f8a" stroke-width=".9"/>
<!-- line, arrow -->
<path d="M196 586.500l10.500 10.500" stroke="#000" stroke-width="1.200"/><path d="M220.500 587l7.500 8.300" stroke="#000" stroke-width="1.300"/><path d="M229.800 597.300l-5-2 3.200-3z" fill="#000"/>
<rect x="240.500" y="586.500" width="15" height="11" fill="none" stroke="#000" stroke-width="1.100"/><ellipse cx="271.200" cy="592" rx="7.800" ry="5.600" fill="none" stroke="#000" stroke-width="1.100"/>
<!-- textbox -->
<rect x="287" y="586" width="13.500" height="11" fill="#fff" stroke="#7a86a8" stroke-width=".9"/><path d="M300.500 586.500v10.500h-13.500" fill="none" stroke="#4a5676" stroke-width=".9"/><path d="M294.500 588.500h4.500M294.500 590.500h4.500M289 593h10M289 595h10" stroke="#9aa6c4" stroke-width=".8"/>
<text x="288.600" y="591.600" font-family="Liberation Sans,sans-serif" font-weight="bold" font-size="6.500" fill="#000">A</text>
<!-- wordart -->
<path d="M309.300 594.600L321.200 584.300H324V597.300l1 1.200h-6.800l1.700-1.300V594.600H316.200L313.600 597.300 311.400 596.300zM317.600 592.300l2.700-2.800v2.800z" fill="url(#gwa)" stroke="#2446a8" stroke-width=".5" fill-rule="evenodd"/>
<!-- diagram -->
<g fill="none" stroke="#3a3a4a" stroke-width=".9"><path d="M336.200 586.600c1.800-1.500 4-1.600 5.600-.3"/><path d="M341.800 584.700v1.900h-1.900"/><path d="M333.200 593v2.500c.3 1 1.200 1.700 2.400 1.900M332.200 594.300h2.200"/><path d="M344.700 592.800c-.2 1.500-1 2.900-2.400 4M344.600 596.600h-2.300v-2.300"/></g>
<circle cx="334.100" cy="590" r="1.900" fill="#f2e04a" stroke="#6a5a10" stroke-width=".5"/><circle cx="343.900" cy="589.800" r="1.900" fill="#e2523a" stroke="#7a2210" stroke-width=".5"/><circle cx="338.900" cy="597.900" r="1.900" fill="#7a72ea" stroke="#2a2a8a" stroke-width=".5"/>
<!-- clipart -->
<rect x="356.800" y="585.900" width="12.600" height="12.200" fill="#fff" stroke="#2f4f9f" stroke-width="1.100"/><circle cx="362.800" cy="590.300" r="2.900" fill="#6a6a6a" stroke="#2a2a2a" stroke-width=".7"/><circle cx="362.200" cy="589.500" r="1.300" fill="#b4b4b4"/><path d="M358.600 597.400c.2-2.800 2-3.900 4.200-3.900s4 1.100 4.200 3.900z" fill="#e2651a" stroke="#a8400a" stroke-width=".4"/><path d="M361.600 593.600l1.200 1.500 1.200-1.500z" fill="#fff"/>
<!-- picture -->
<rect x="379.800" y="585.900" width="12.600" height="12.200" fill="#fff" stroke="#2f4f9f" stroke-width="1.100"/><path d="M380.400 597.500v-2.700l5-4.400 6.500 5.800v1.300z" fill="#b4c2dc"/><path d="M380.400 594.800l5-4.400 6.500 5.800" fill="none" stroke="#2a3450" stroke-width="1"/><path d="M386.500 593.500l2-1.700 3 2.600" fill="none" stroke="#6a7490" stroke-width=".7"/><circle cx="388.100" cy="588.900" r="1.900" fill="#f07a1a"/><circle cx="388.100" cy="588.900" r=".8" fill="#ffd860"/>
<!-- fill bucket -->
<rect x="407" y="596.300" width="16" height="3.700" fill="#bfe4da"/><path d="M410 590.500l5.500-4.500 5 5.500-5.500 4.200z" fill="#fff" stroke="#3a4a6a" stroke-width=".9"/><path d="M414.500 584.500v5" stroke="#3a4a6a" stroke-width=".9"/><path d="M420.300 589.500c2 .5 3 2.500 2.500 5-.8-1.600-2-2.600-3.300-3z" fill="#3a6ad0"/>
<path d="M428.800 591h5.600l-2.800 3zM462.800 591h5.600l-2.800 3zM496.800 591h5.600l-2.800 3z" fill="#000"/>
<!-- line colour -->
<rect x="441" y="596.300" width="16" height="3.700" fill="#000"/><path d="M456.500 584.300l1.500 1.500-5 6-2.300-1.800z" fill="#f0c848" stroke="#7a6220" stroke-width=".5"/><path d="M450.700 590l2.300 1.800c-1.500 2.500-5 3.200-8.500 2.700 2.600-.6 4.600-2 6.200-4.500z" fill="#4a7ad8"/><path d="M441.500 594.500h3" stroke="#2a4ab0" stroke-width="1.200"/>
<!-- font colour -->
<rect x="475" y="596.300" width="16" height="3.700" fill="#000"/>
<!-- line style -->
<g stroke="#000" shape-rendering="crispEdges"><path d="M509 586.500h15" stroke-width="1"/><path d="M509 590h15" stroke-width="2"/><path d="M509 594.500h15" stroke-width="3"/>
<path d="M532 587.500h15" stroke-width="1"/><path d="M532 590.500h15" stroke-width="1" stroke-dasharray="1 1"/><path d="M532 593.500h15" stroke-width="1" stroke-dasharray="3 1"/><path d="M532 596.500h15" stroke-width="1" stroke-dasharray="3 1 1 1"/></g>
<!-- arrow style -->
<g stroke="#000" stroke-width="1.100" fill="#000"><path d="M556 586.500h13M556 592h13M556 597.500h13"/><path d="M569.800 586.500l-3.500-2.200v4.400zM555.200 592l3.500-2.200v4.400zM569.800 597.500l-3.500-2.200v4.400zM555.200 597.500l3.500-2.200v4.400z" stroke="none"/></g>
<!-- shadow -->
<rect x="581.500" y="587.500" width="10" height="10" fill="#1a1a1a" opacity=".75"/><rect x="579.500" y="585.500" width="10" height="10" fill="url(#ggreen)" stroke="#2a6a2a" stroke-width=".8"/>
<!-- 3d -->
<path d="M602.500 589.500l4-4h9.500v9.500l-4 4h-9.500z" fill="#3a8a3a" stroke="#1f4f1f" stroke-width=".8"/><rect x="602.500" y="589.500" width="9.500" height="9.500" fill="url(#ggreen)" stroke="#2a6a2a" stroke-width=".8"/><path d="M602.500 589.500l4-4h9.500l-4 4z" fill="#c4ecc0" stroke="#2a6a2a" stroke-width=".6"/>
<!-- cap glyph -->
<g fill="#000"><rect x="624" y="594" width="5" height="1"/><path d="M624 596.500h5l-2.500 3z"/></g><g fill="#fff"><rect x="625" y="595" width="5" height="1"/><path d="M627.500 600.500l2.500-3v1.200l-2 2.300z"/></g>
</svg>
<div class="t" style="left:476px;top:581.500px;font-size:15.500px;font-weight:bold;font-family:'Liberation Serif',serif;color:#3a5a9a">A</div>

<!-- STATUS BAR -->
<div class="a" style="left:0;top:605px;width:1145px;height:23px;background:#f0f0f0"></div>
<div class="sp" style="left:4px;width:245px;letter-spacing:-.05px;padding-right:1px">Слайд 1 из 1</div>
<div class="sp" style="left:254px;width:245px;letter-spacing:.22px">Оформление по умолчанию</div>
<div class="sp" style="left:504px;width:177px;letter-spacing:.4px">русский (Россия)</div>
<div class="sp" style="left:686px;width:31px"></div>
</body></html>
